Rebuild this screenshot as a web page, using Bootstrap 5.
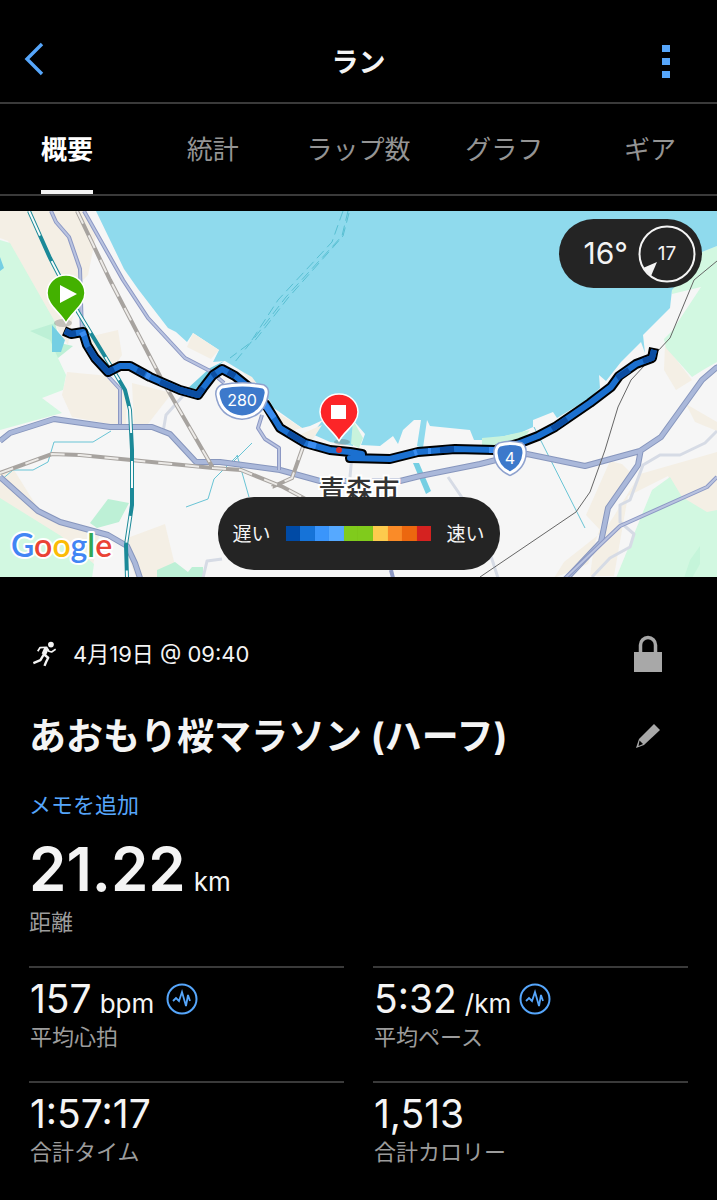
<!DOCTYPE html>
<html lang="ja">
<head>
<meta charset="utf-8">
<meta name="viewport" content="width=device-width, initial-scale=1">
<title>ラン</title>
<link href="https://cdn.jsdelivr.net/npm/bootstrap@5.3.0/dist/css/bootstrap.min.css" rel="stylesheet">
<style>
  body { background:#000; color:#f4f4f4; font-family:Inter,"Noto Sans CJK JP",sans-serif; overflow-x:hidden; }
  .icon-btn { color:#56a6fb; line-height:0; border:0; padding:0; background:none; width:40px; height:44px; display:flex; align-items:center; justify-content:center; }
  .icon-btn.muted-icon { color:#a8a8a8; }
  .top-bar { padding:38px 14px 20px; border-bottom:2px solid #3a3a3a; }
  .top-bar .icon-btn { width:74px; }
  .top-bar .back-btn { justify-content:flex-start; padding-left:8px; }
  .top-title { font-size:27px; font-weight:700; line-height:44px; margin:0; padding-top:3px; height:44px; }
  .tabs { height:92px; border-bottom:2px solid #3a3a3a; }
  .tabs ul { display:grid; grid-template-columns:repeat(5,1fr); margin:0 -6px; height:90px; padding:0; list-style:none; }
  .tabs li { text-align:center; }
  .tabs a { display:inline-block; height:90px; line-height:92px; font-size:26px; color:#949494; text-decoration:none; border-bottom:4px solid transparent; white-space:nowrap; }
  .tabs a.active { color:#fff; font-weight:700; border-color:#f4f4f4; }
  .map-area { margin-top:15px; }
  .map-area > svg { display:block; width:100%; height:auto; }
  .pill { background:#242424; position:absolute; display:flex; align-items:center; border-radius:36px; }
  .weather { top:8px; right:15px; height:69px; padding:0 6px 0 25px; gap:10px; font-size:30px; }
  .legend-pill { bottom:7px; left:50%; transform:translateX(-50%); height:73px; padding:0 15px; gap:15px; font-size:19px; white-space:nowrap; }
  .legend-pill .cap { padding-top:4px; }
  .scale { width:146px; height:15px; }
  .scale span { flex:1; }
  .details { padding:55px 29px 20px; }
  .when { font-size:22px; line-height:44px; gap:17px; padding-left:4px; }
  .name-row { margin-top:35px; }
  .name { font-size:37px; font-weight:700; line-height:52px; margin:0; white-space:nowrap; }
  .memo-row { margin-top:27px; line-height:30px; }
  .memo { font-size:22px; color:#56a6fb; text-decoration:none; }
  .big { font-size:60px; font-weight:600; line-height:64px; height:64px; margin-top:15px; gap:8px; }
  .big small, .value small { font-size:26px; font-weight:400; }
  .label { font-size:22px; line-height:26px; height:26px; color:#9c9c9c; }
  .stats { display:grid; grid-template-columns:1fr 1fr; column-gap:29px; margin-top:31px; }
  .stat { border-top:2px solid #3a3a3a; padding:9px 0 31px 1px; }
  .value { font-size:39px; line-height:44px; height:44px; margin-bottom:3px; white-space:nowrap; }
  .act { margin-right:20px; }
</style>
</head>
<body>
<header class="top-bar d-flex align-items-center justify-content-between">
  <button class="icon-btn back-btn" aria-label="戻る"><svg width="24" height="36" viewBox="0 0 24 36" fill="none" stroke="currentColor" stroke-width="3.4"><path d="M20 2 5 17 20 32"/></svg></button>
  <h1 class="top-title">ラン</h1>
  <button class="icon-btn" aria-label="メニュー"><svg width="8" height="34" viewBox="0 0 8 34" fill="currentColor" overflow="visible"><path d="M0 2h8v7H0zM0 15h8v7H0zM0 28h8v7H0z"/></svg></button>
</header>
<nav class="tabs">
  <ul>
    <li><a href="#" class="active" aria-current="page">概要</a></li>
    <li><a href="#">統計</a></li>
    <li><a href="#">ラップ数</a></li>
    <li><a href="#">グラフ</a></li>
    <li><a href="#">ギア</a></li>
  </ul>
</nav>

<section class="map-area position-relative">
<svg viewBox="0 211 717 366" role="img" aria-label="コース地図">
  <path fill="#f6f6f6" d="M0 211h717v366H0z"/>
  <!-- built-up areas -->
  <g fill="#f4efe5">
    <path d="M0 211h84l12 24-8 40-10 10-10 60-8-12L8 241 0 238z"/>
    <path d="M84 338l34-8 4 25-12 18-20-14zM67 372l42 4 18 18-1 33-54-10-10-22zM132 383l40 10-28 36-10-2z"/>
    <path d="M0 472l14-2 25 40 60 26-6 29L0 510zM122 540l43-16 13 54h-42z"/>
    <path d="M665 345l27 35-16 10-12-20zM686 404l31 18v9l-22-9zM610 461l12 3 10 10-24 30-20 60-34 14 10-16 38-30-16-17zM640 474l77-22v60l-12 2-25-12-12-26-40 20-14 80h-24l4-30 20-30z"/>
  </g>
  <g fill="#d2f8e1">
    <path d="M0 240l10 3 45 79 4 22-1 14 8 17-3 15-21 8 20 15L0 430z"/>
    <path d="M0 498l61 38 33 28-2 14H0z"/>
    <path d="M672 294L672 280 702 252 717 246V362L703 370 692 377 666 348 664 339 672 331 701 287z"/>
    <path d="M670 477l-18 13-36 88h101v-68l-10 2-25-15z"/>
  </g>
  <g fill="#bdf0d6">
    <path d="M30 331l25-8 5 20 13 3-15 12-8-18zM90 523l18-24 21 4-10 19-22 6zM157 570l18-8 13 10 4-5h11v11h-46z"/>
  </g>
  <path fill="#c5f5da" d="M690 560l10-14v18l-8 14h-8z"/>
  <!-- bay -->
  <path fill="#8fdaed" d="M96 211L124 269 138 289 168 328 176 332 187 342 193 333 219 350 213 362 225 361 243 372 254 384 262 388 259 394 272 407 278 411 302 428 310 426 323 420 312 434 330 442 353 446 353 420 365 434 361 445 380 446 393 436 398 444 403 430 414 420 421 420 417 446 423 448 427 420 430 426 470 430 474 440 484 440 520 433 533 427 533 420 553 412 557 418 590 398 600 388 599 375 606 381 621 362 641 342 645 353 643 335 670 308 672 290 702 252 717 246V211z"/>
  <g fill="#f4efe5"><path d="M193 333l26 17-8 9-24-12zM243 372l9 5 20 27-10-8zM272 409l30 19-12 3-14-12zM322 425l-14 22-18-8z"/></g>
  <path fill="#c8f3dc" d="M353 420l10 18-4 10-8-4zM482 438l22-2 26-6-10 14-38 7z"/>
  <path fill="#75cfe3" d="M52 325l13 15-4 12h-9zM413 463l6 0 12 28-5 3zM187 389l23-21 14-7-16 14-16 18zM0 257l4 11-4 3z"/>
  <g fill="none" stroke="#69c4d5" stroke-width="1">
    <path d="M0 481l13-11h20l15-8 6-20h39l18-11M238 455l-24 24-6 20-22 8M534 427l51 101M237 455l12 42M252 443l-20 20"/>
  </g>
  <!-- ferry lines -->
  <g fill="none" stroke="#58bfd2" stroke-width="1" stroke-dasharray="10 5">
    <path d="M343 211l-11 31-54 58-28 43-20 15M348 211l-6 25-56 61-34 44-18 22M349 213l-6 23-55 62-35 45"/>
  </g>
  <!-- minor roads -->
  <g fill="none" stroke="#d6dbe5" stroke-width="3" stroke-linejoin="round">
    <path d="M190 388l-24 27-3 17M717 431l-12 12-25 12h-20l-17 10-13 35-10 5v17l14 12-4 13-20 11-18 19M203 578l4-17 15-2M352 455l-2 22M448 477l15 22M489 550l9 28"/>
  </g>
  <!-- main roads -->
  <g fill="none" stroke-linejoin="round">
    <path stroke="#8796bd" stroke-width="6" d="M0 441l10-8 44-14 56 8h42l18 7 26 28h24l60 8 40 11h80l20-5 60-12 16-4 31-6 58 12 55-15 21-14 41-57 14-12 14-7M641 449l-3 16-30 43-7 34-34 36M0 477l38 34 22 11 48 13 19 11 8 17 5 15"/>
    <path stroke="#aab8da" stroke-width="4" d="M0 441l10-8 44-14 56 8h42l18 7 26 28h24l60 8 40 11h80l20-5 60-12 16-4 31-6 58 12 55-15 21-14 41-57 14-12 14-7M641 449l-3 16-30 43-7 34-34 36M0 477l38 34 22 11 48 13 19 11 8 17 5 15"/>
    <path stroke="#8c98c4" stroke-width="4" d="M84 211l26 46 13 23 25 38 37 40 25 13 14 12M51 211l5 11 13 15 11 32 2 65M108 376l12 13v35M717 477l-10 10-87 39-20 19-40 38M262 415l-4 13 7 11 14 9v22M391 570l2 8"/>
    <path stroke="#b9c3e0" stroke-width="2" d="M84 211l26 46 13 23 25 38 37 40 25 13 14 12M51 211l5 11 13 15 11 32 2 65M108 376l12 13v35M717 477l-10 10-87 39-20 19-40 38M262 415l-4 13 7 11 14 9v22"/>
  </g>
  <!-- railways -->
  <g fill="none">
    <path stroke="#a7a39f" stroke-width="4" d="M77 211l33 69 52 100 51 88M0 473l52-19 28 1 133 13 28 2 42 17 30 16M303 447l-11 31-20 9"/>
    <path stroke="#eceae7" stroke-width="2" stroke-dasharray="14 13" d="M77 211l33 69 52 100 51 88M0 473l52-19 28 1 133 13 28 2 42 17 30 16M303 447l-11 31-20 9"/>
    <path stroke="#1b8998" stroke-width="4" d="M29 211l21 47 28 54 34 56 13 22 5 20 2 40v55l-6 40 1 33"/>
    <path stroke="#f4fbfb" stroke-width="2" stroke-dasharray="27 28" d="M29 211l21 47 28 54 34 56 13 22 5 20 2 40v55l-6 40 1 33"/>
    <path stroke="#666" stroke-width="1" d="M717 261l-23 19-24 58-39 42-13 27-13 43-15 42-14 20-96 65"/>
  </g>
  <text x="359" y="500" text-anchor="middle" font-family="Noto Sans CJK JP,sans-serif" font-size="27" font-weight="500" fill="#333" stroke="#fff" stroke-width="4" paint-order="stroke">青森市</text>
  <!-- recorded course, coloured by pace -->
  <g fill="none" stroke-linejoin="round">
    <path stroke="#000" stroke-width="10" d="M64 331L71 334 83 332 87 345 95 358 108 372 120 366 130 366 150 377 180 390 198 395 203 388 213 375 222 369 235 376 250 388 266 405 280 428 305 443 330 450 350 452 362 454 362 457 350 458 390 459 418 452 455 449 495 450 520 443 538 436 555 427 590 403 611 387 619 376 636 364 652 358 654 348"/>
    <path stroke="#1b70d0" stroke-width="6" d="M65 331L71 334 83 332 87 345 95 358 108 372 120 366 130 366 150 377 180 390 198 395 203 388 213 375 222 369 235 376 250 388 266 405 280 428 305 443 330 450 350 452 362 454 362 457 350 458 390 459 418 452 455 449 495 450 520 443 538 436 555 427 590 403 611 387 619 376 636 364 652 358 654 350"/>
    <path stroke="#0b4da2" stroke-width="6" d="M65 331l6 3 5-1M88 347l7 11 13 14 6-3M137 370l8 4M160 382l20 8 18 5 5-7M212 376l4-3M228 372l7 4M288 433l17 10M440 450l14-1M552 429l15-10M617 378l12-8M643 361l9-3 2-8"/>
    <path stroke="#3b8df0" stroke-width="6" d="M82 332l2 4M146 375l4 2M262 401l12 17M308 444l8 2M414 453l3-1M428 451h3M489 450l6 0"/>
  </g>
  <circle cx="339" cy="450" r="3" fill="#d83030"/>
  <!-- route shields -->
  <g font-family="Inter,sans-serif" fill="#fff" text-anchor="middle">
    <path d="M222 387q20-4 41 0 4 2 3 7-3 21-24 23-21-2-24-23 0-5 4-7z" stroke="#8fa2ce" stroke-width="6"/>
    <path d="M222 387q20-4 41 0 4 2 3 7-3 21-24 23-21-2-24-23 0-5 4-7z" fill="#3d79cb" stroke="#fff" stroke-width="3"/>
    <text x="242" y="406" font-size="16">280</text>
    <path d="M500 445q10-3 21 0 3 2 3 8-1 14-14 20-13-6-14-20 0-6 4-8z" stroke="#8fa2ce" stroke-width="6"/>
    <path d="M500 445q10-3 21 0 3 2 3 8-1 14-14 20-13-6-14-20 0-6 4-8z" fill="#3d79cb" stroke="#fff" stroke-width="3"/>
    <text x="510" y="464" font-size="16">4</text>
  </g>
  <!-- start and finish pins -->
  <ellipse cx="63" cy="323" rx="9" ry="4" fill="#555" opacity=".3"/>
  <path d="M66 323C60 312 47 305 47 293a19 18 0 0 1 38 0c0 12-13 19-19 30z" fill="#43b100" stroke="#fff" stroke-width="1.500"/>
  <path d="M60 285v18l17-9z" fill="#fff"/>
  <ellipse cx="342" cy="442" rx="8" ry="3" fill="#555" opacity=".3"/>
  <path d="M339 441c-6-11-19-17-19-29a19 18 0 0 1 38 0c0 12-13 18-19 29z" fill="#fc2528" stroke="#fff" stroke-width="1.500"/>
  <path d="M331 405h15v14h-15z" fill="#fff"/>
  <text x="11" y="557" font-family="Lato,sans-serif" font-size="32" font-weight="600" stroke="#fff" stroke-width="4" paint-order="stroke" stroke-linejoin="round"><tspan fill="#4285f4">G</tspan><tspan fill="#ea4335">o</tspan><tspan fill="#fbbc05">o</tspan><tspan fill="#4285f4">g</tspan><tspan fill="#34a853">l</tspan><tspan fill="#ea4335">e</tspan></text>
</svg>
  <div class="pill weather">
    <span>16°</span>
    <svg width="58" height="58" viewBox="0 0 58 58"><circle cx="29" cy="29" r="27.500" fill="none" stroke="#f4f4f4" stroke-width="2"/><path d="M5 43l14-6-6 14z" fill="#f4f4f4"/><text x="29" y="35" text-anchor="middle" font-size="19" fill="#f4f4f4">17</text></svg>
  </div>
  <div class="pill legend-pill">
    <span class="cap">遅い</span>
    <span class="scale d-flex">
      <span style="background:#004aa5"></span><span style="background:#1673d8"></span><span style="background:#3a95fb"></span><span style="background:#56a9ff"></span><span style="background:#80cb1c"></span><span style="background:#80cb1c"></span><span style="background:#fdcb4d"></span><span style="background:#fa8b28"></span><span style="background:#ec670f"></span><span style="background:#d52220"></span>
    </span>
    <span class="cap">速い</span>
  </div>
</section>

<main class="details">
  <div class="d-flex justify-content-between align-items-center">
    <div class="when d-flex align-items-center">
      <svg width="23" height="26" viewBox="99 64 68 76" fill="none" stroke="#f4f4f4" stroke-linejoin="round"><circle cx="152" cy="74" r="8.500" fill="#f4f4f4" stroke="none"/><path stroke-width="14" d="M139 85l-8 18"/><path stroke-width="5" d="M113 94l7-11 19-1 7 12 8 2 12-8"/><path stroke-width="7" d="M130 102l14 11-6 12-5 12M131 103l-10 17-21 9"/></svg>
      <span>4月19日 @ 09:40</span>
    </div>
    <button class="icon-btn muted-icon act" aria-label="非公開"><svg width="30" height="38" viewBox="0 0 30 38"><path d="M1 17h28v20H1z" fill="currentColor"/><path d="M7.500 18v-8a7.500 7.500 0 0 1 15 0v8" fill="none" stroke="currentColor" stroke-width="3.500"/></svg></button>
  </div>
  <div class="name-row d-flex justify-content-between align-items-center">
    <h2 class="name">あおもり桜マラソン (ハーフ)</h2>
    <button class="icon-btn muted-icon act" aria-label="編集"><svg width="26" height="26" viewBox="0 0 26 26"><path d="M19 0l6 6L9 21 1 24 4 15z" fill="currentColor"/><path d="M4.500 16.500L8 20 3.500 22z" fill="#000"/></svg></button>
  </div>
  <div class="memo-row"><a href="#" class="memo">メモを追加</a></div>
  <div class="big d-flex align-items-baseline"><span>21.22</span><small>km</small></div>
  <div class="label mt-2">距離</div>
  <div class="stats">
    <div class="stat">
      <div class="value d-flex align-items-baseline gap-2"><span>157</span><small>bpm</small>
        <button class="icon-btn w-auto h-auto align-self-center ms-1" aria-label="心拍グラフ"><svg width="32" height="32" viewBox="0 0 32 32" fill="none" stroke="currentColor"><circle cx="16" cy="16" r="14.500" stroke-width="2"/><path d="M7 18l3-3 3 3 3-9 4 14 2-11 2 6" stroke-width="1.800"/></svg></button></div>
      <div class="label">平均心拍</div>
    </div>
    <div class="stat">
      <div class="value d-flex align-items-baseline gap-2"><span>5:32</span><small>/km</small>
        <button class="icon-btn w-auto h-auto align-self-center" aria-label="ペースグラフ"><svg width="32" height="32" viewBox="0 0 32 32" fill="none" stroke="currentColor"><circle cx="16" cy="16" r="14.500" stroke-width="2"/><path d="M7 18l3-3 3 3 3-9 4 14 2-11 2 6" stroke-width="1.800"/></svg></button></div>
      <div class="label">平均ペース</div>
    </div>
    <div class="stat"><div class="value">1:57:17</div><div class="label">合計タイム</div></div>
    <div class="stat"><div class="value">1,513</div><div class="label">合計カロリー</div></div>
  </div>
</main>
<script src="https://cdn.jsdelivr.net/npm/bootstrap@5.3.0/dist/js/bootstrap.bundle.min.js"></script>
</body>
</html>
